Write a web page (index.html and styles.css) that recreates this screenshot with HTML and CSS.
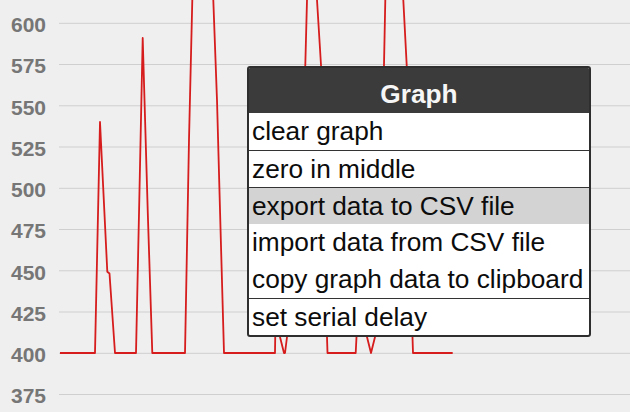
FILE: index.html
```html
<!DOCTYPE html>
<html>
<head>
<meta charset="utf-8">
<link rel="stylesheet" href="styles.css">
</head>
<body>
<div class="chart">
  <div class="axis">
    <div class="tick">600</div>
    <div class="tick">575</div>
    <div class="tick">550</div>
    <div class="tick">525</div>
    <div class="tick">500</div>
    <div class="tick">475</div>
    <div class="tick">450</div>
    <div class="tick">425</div>
    <div class="tick">400</div>
    <div class="tick">375</div>
  </div>
  <svg class="plot" width="571" height="412" viewBox="59 0 571 412">
    <g class="grid">
      <line x1="59" x2="630" y1="23.3" y2="23.3"/>
      <line x1="59" x2="630" y1="64.5" y2="64.5"/>
      <line x1="59" x2="630" y1="105.8" y2="105.8"/>
      <line x1="59" x2="630" y1="147" y2="147"/>
      <line x1="59" x2="630" y1="188.3" y2="188.3"/>
      <line x1="59" x2="630" y1="229.5" y2="229.5"/>
      <line x1="59" x2="630" y1="270.8" y2="270.8"/>
      <line x1="59" x2="630" y1="312" y2="312"/>
      <line x1="59" x2="630" y1="353.3" y2="353.3"/>
      <line x1="59" x2="630" y1="394.5" y2="394.5"/>
    </g>
    <polyline class="series" points="60,353 95,353 100,122 107.3,271.7 109.5,273.5 115,353 136,353 139.3,200 142.7,38 147.7,210 152.3,353 185,353 189,140 192.3,0 192.8,-30 212.8,-30 213.3,0 217,100 220,210 224,353 275,353 276.5,250 279,250 280,337 284,353 285,353 287,337 305.3,65 307,0 307.5,-30 316.5,-30 317,0 321,65 327,337 327.5,353 355.7,353 356.5,337 360,250 366,250 367,337 371,353 375,337 384,65 385.3,0 385.6,-30 402.8,-30 403.3,0 406.7,65 412.5,337 413,353 452.7,353"/>
  </svg>
  <div class="menu">
    <div class="menu-title">Graph</div>
    <div class="menu-item">clear graph</div>
    <div class="menu-item sep">zero in middle</div>
    <div class="menu-item sep active">export data to CSV file</div>
    <div class="menu-item">import data from CSV file</div>
    <div class="menu-item">copy graph data to clipboard</div>
    <div class="menu-item sep">set serial delay</div>
  </div>
</div>
</body>
</html>
```
FILE: styles.css
```css
html, body {
  margin: 0;
  padding: 0;
  width: 630px;
  height: 412px;
  overflow: hidden;
  background: #efefef;
  font-family: "Liberation Sans", Arial, sans-serif;
}

.chart {
  position: relative;
  width: 630px;
  height: 412px;
  display: grid;
  grid-template-columns: 46px 571px;
  column-gap: 13px;
}

.axis {
  padding-top: 4px;
  display: flex;
  flex-direction: column;
}

.tick {
  flex: 0 0 41.25px;
  line-height: 41.25px;
  text-align: right;
  font-weight: bold;
  font-size: 21px;
  color: #767676;
}

.plot {
  display: block;
  overflow: visible;
}

.grid line {
  stroke: #cfcfcf;
  stroke-width: 1;
}

.series {
  fill: none;
  stroke: #d61c1c;
  stroke-width: 1.8;
  stroke-linejoin: round;
}

.menu {
  position: absolute;
  left: 247px;
  top: 66px;
  width: 344px;
  box-sizing: border-box;
  border: 2px solid #2e2e2e;
  border-radius: 3px;
  background: #ffffff;
  overflow: hidden;
  font-size: 26.25px;
  color: #0c0c0c;
}

.menu-title {
  height: 45px;
  box-sizing: border-box;
  padding-top: 8px;
  line-height: 37px;
  background: #3b3b3b;
  color: #f6f6f6;
  font-weight: bold;
  text-align: center;
}

.menu-item {
  height: 37px;
  box-sizing: border-box;
  line-height: 37px;
  padding-left: 3px;
  white-space: nowrap;
}

.menu-item.sep {
  border-top: 1px solid #333333;
  line-height: 36px;
}

.menu-item.active {
  background: #d3d3d3;
}
```
